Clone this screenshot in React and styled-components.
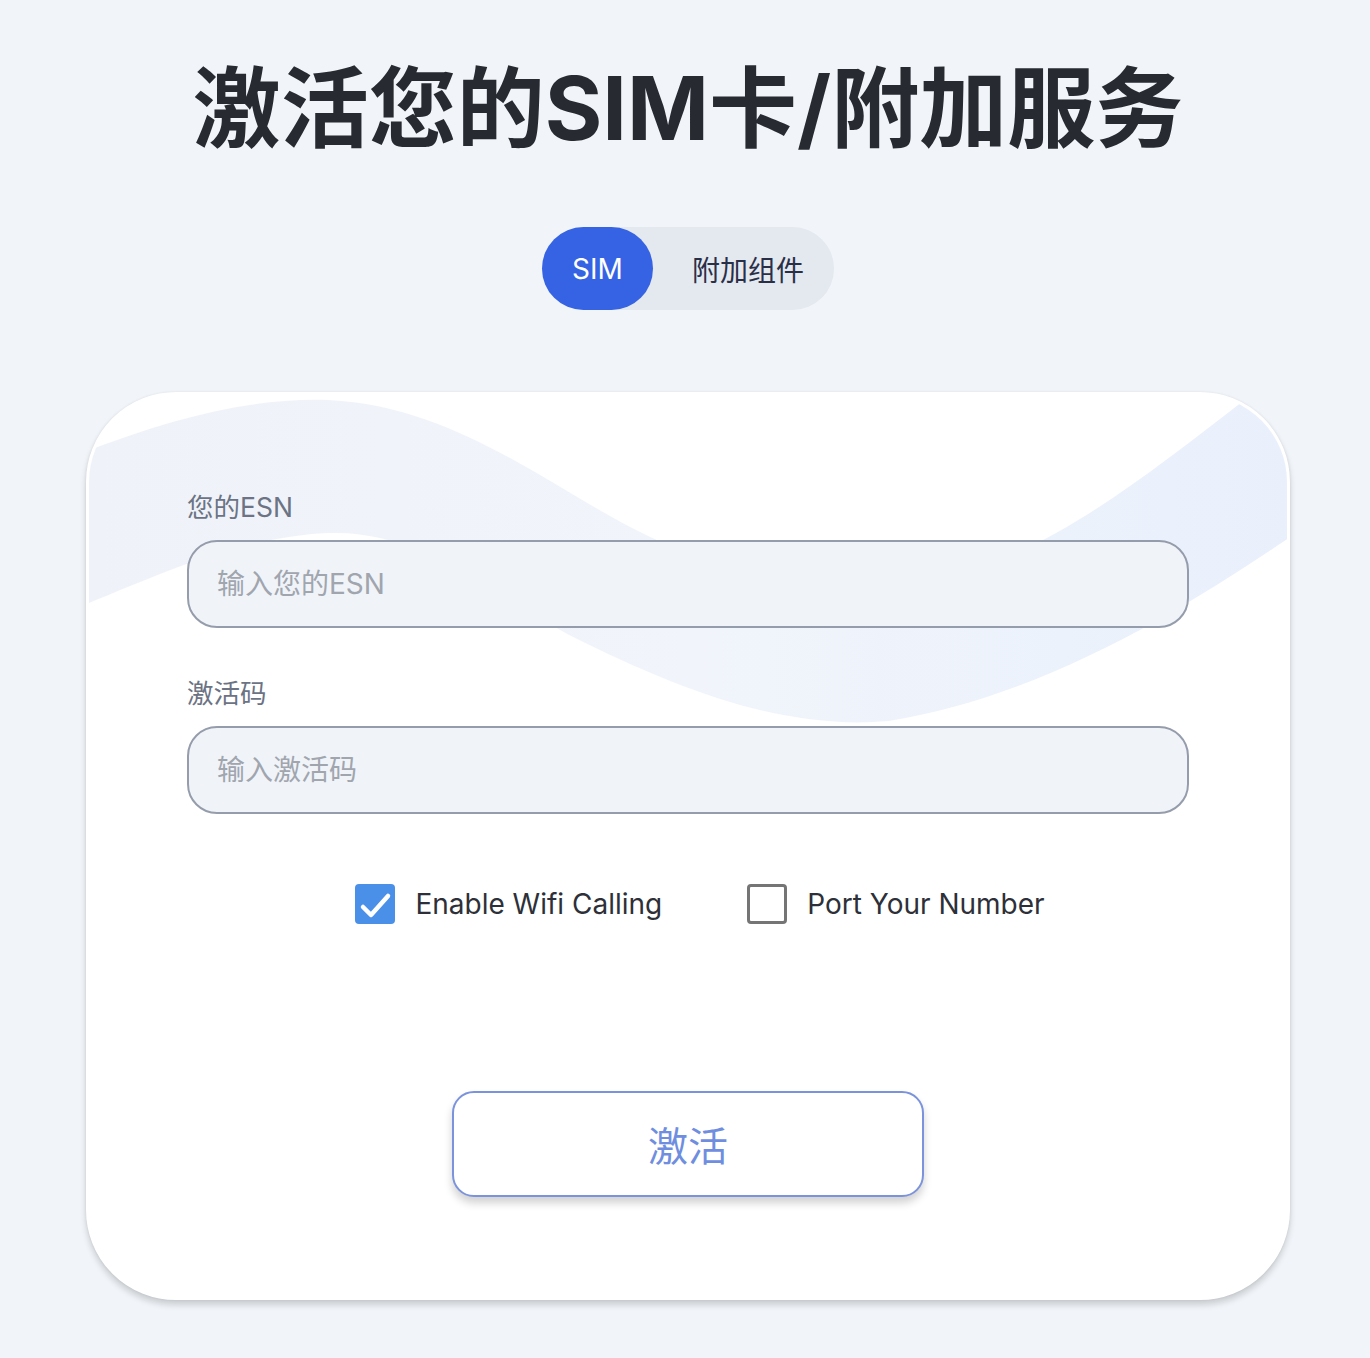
import React, { useState } from "react";
import styled, { createGlobalStyle } from "styled-components";

const Global = createGlobalStyle`
  html, body { margin: 0; padding: 0; background: #f1f5f9; }
  body { font-family: "Inter", "Noto Sans CJK SC", sans-serif; }
  * { box-sizing: border-box; }
`;

const Page = styled.main`
  min-height: 1358px;
  display: flex;
  flex-direction: column;
  align-items: center;
  padding-top: 55px;
  padding-left: 6px;
`;

const Title = styled.h1`
  margin: 0;
  font-size: 88px;
  line-height: 106px;
  font-weight: 700;
  color: #272a31;
`;

const Toggle = styled.div`
  margin-top: 66px;
  display: flex;
  height: 83px;
  border-radius: 42px;
  background: #e4e8ef;
`;

const ToggleButton = styled.button`
  border: none;
  height: 100%;
  padding: ${(p) => (p.$active ? "0 30px" : "0 30px 0 39px")};
  border-radius: 42px;
  font-family: inherit;
  font-size: 28px;
  cursor: pointer;
  background: ${(p) => (p.$active ? "#3563e3" : "transparent")};
  color: ${(p) => (p.$active ? "#ffffff" : "#2a2f48")};
`;

const Card = styled.section`
  position: relative;
  margin-top: 82px;
  width: 1204px;
  height: 908px;
  border-radius: 90px;
  background: #ffffff;
  border: 3px solid #ffffff;
  overflow: hidden;
  box-shadow: 0 5px 6px rgba(0, 0, 0, 0.16), 0 0 3px rgba(0, 0, 0, 0.08);
  padding: 96px 98px 0;
  display: flex;
  flex-direction: column;
`;

const Wave = styled.svg`
  position: absolute;
  inset: 0;
  width: 100%;
  height: 100%;
  pointer-events: none;
`;

const Content = styled.div`
  position: relative;
  z-index: 1;
  display: flex;
  flex-direction: column;
`;

const Field = styled.div`
  display: flex;
  flex-direction: column;
  gap: 17px;
  margin-bottom: ${(p) => p.$mb || 0}px;
`;

const Label = styled.label`
  font-size: 26.5px;
  line-height: 32px;
  color: #6b7384;
`;

const Input = styled.input`
  width: 1002px;
  height: 88px;
  border: 2px solid #959cab;
  border-radius: 30px;
  background: #f0f4f9;
  padding: 0 28px;
  font-family: inherit;
  font-size: 28px;
  color: #2d3038;
  outline: none;
  &::placeholder { color: #a0a5ae; }
`;

const CheckRow = styled.div`
  margin-top: 70px;
  display: flex;
  justify-content: center;
  gap: 85px;
  padding-left: 24px;
`;

const CheckItem = styled.label`
  display: flex;
  align-items: center;
  gap: 20px;
  font-size: 28px;
  color: #2d3038;
  cursor: pointer;
`;

const Box = styled.span`
  width: 40px;
  height: 40px;
  border-radius: 4px;
  display: flex;
  align-items: center;
  justify-content: center;
  background: ${(p) => (p.$checked ? "#4a8fe8" : "#ffffff")};
  border: ${(p) => (p.$checked ? "none" : "3px solid #757575")};
`;

const ActionRow = styled.div`
  margin-top: 167px;
  display: flex;
  justify-content: center;
`;

const Activate = styled.button`
  width: 472px;
  height: 106px;
  border: 2px solid #7b93dc;
  border-radius: 22px;
  background: #ffffff;
  color: #6f8ee0;
  font-family: inherit;
  font-size: 40px;
  box-shadow: 0 6px 8px rgba(0, 0, 0, 0.18);
  cursor: pointer;
`;

function Check({ checked, onClick, children }) {
  return (
    <CheckItem onClick={onClick}>
      <Box $checked={checked}>
        {checked && (
          <svg width="40" height="40" viewBox="0 0 40 40">
            <path d="M8 23 L16 31 L33 12" fill="none" stroke="#fff" strokeWidth="4.5" strokeLinecap="round" strokeLinejoin="round" />
          </svg>
        )}
      </Box>
      {children}
    </CheckItem>
  );
}

export default function App() {
  const [tab, setTab] = useState("sim");
  const [wifi, setWifi] = useState(true);
  const [port, setPort] = useState(false);
  return (
    <>
      <Global />
      <Page>
        <Title>激活您的SIM卡/附加服务</Title>
        <Toggle>
          <ToggleButton $active={tab === "sim"} onClick={() => setTab("sim")}>SIM</ToggleButton>
          <ToggleButton $active={tab === "addon"} onClick={() => setTab("addon")}>附加组件</ToggleButton>
        </Toggle>
        <Card>
          <Wave viewBox="0 0 1198 902" preserveAspectRatio="none">
            <defs>
              <linearGradient id="wg" x1="0" y1="0" x2="1" y2="0">
                <stop offset="0" stopColor="#eff3f9" />
                <stop offset="0.5" stopColor="#f1f5fb" />
                <stop offset="1" stopColor="#e9f0fc" />
              </linearGradient>
            </defs>
            <path
              d="M0,55 C80,25 160,2 240,5 C380,12 480,110 580,150 C680,190 760,200 860,180 C960,160 1060,80 1200,-30 L1200,143 C1100,210 960,300 800,326 C700,335 600,300 480,240 C400,195 330,135 240,138 C150,142 70,180 0,208 Z"
              fill="url(#wg)"
            />
          </Wave>
          <Content>
            <Field $mb={49}>
              <Label htmlFor="esn">您的ESN</Label>
              <Input id="esn" placeholder="输入您的ESN" />
            </Field>
            <Field>
              <Label htmlFor="code">激活码</Label>
              <Input id="code" placeholder="输入激活码" />
            </Field>
            <CheckRow>
              <Check checked={wifi} onClick={() => setWifi(!wifi)}>Enable Wifi Calling</Check>
              <Check checked={port} onClick={() => setPort(!port)}>Port Your Number</Check>
            </CheckRow>
            <ActionRow>
              <Activate>激活</Activate>
            </ActionRow>
          </Content>
        </Card>
      </Page>
    </>
  );
}
